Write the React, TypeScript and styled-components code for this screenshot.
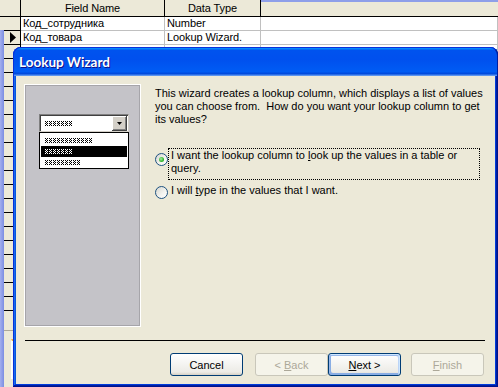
import React, { useId } from 'react';
import styled, { createGlobalStyle, css } from 'styled-components';

const GlobalStyle = createGlobalStyle`
  html, body { margin: 0; padding: 0; }
  body {
    width: 498px;
    height: 387px;
    overflow: hidden;
    background: #ece9d8;
    font-family: "Liberation Sans", Arial, sans-serif;
    font-size: 11px;
    color: #000;
  }
  * { box-sizing: border-box; }
`;

/* ---------- background: table design grid ---------- */

const Screen = styled.div`
  position: relative;
  width: 498px;
  height: 387px;
  overflow: hidden;
  display: flex;
  flex-direction: column;
  background: #ece9d8;
`;

const HeaderRow = styled.div`
  display: flex;
  flex: none;
  height: 17px;
  border-bottom: 1px solid #000;
`;

const HeadCell = styled.div<{ $w?: number }>`
  display: flex;
  align-items: center;
  justify-content: center;
  line-height: 16px;
  letter-spacing: -0.1px;
  ${(p) =>
    p.$w
      ? css`
          width: ${p.$w}px;
          flex: none;
          border-right: 1px solid #000;
        `
      : css`
          flex: 1;
          box-shadow: inset 0 2px #8e9fe9;
        `}
`;

const Main = styled.div`
  flex: 1;
  display: flex;
  min-height: 0;
`;

const Strip = styled.div`
  flex: none;
  width: 4px;
  margin-top: 13px;
  background: linear-gradient(90deg, #a3afee, #7c8ee2);
`;

const Sheet = styled.div`
  flex: 1;
  display: flex;
  flex-direction: column;
`;

const Row = styled.div`
  display: flex;
  flex: none;
  height: 14px;
`;

const SelCell = styled.div`
  flex: none;
  width: 17px;
  display: flex;
  align-items: center;
  justify-content: center;
  padding-left: 3px;
  background: #ece9d8;
  border-right: 1px solid #000;
  border-bottom: 1px solid #000;
`;

const DataCell = styled.div<{ $w?: number }>`
  ${(p) => (p.$w ? css`width: ${p.$w}px; flex: none;` : css`flex: 1;`)}
  background: #fff;
  border-right: 1px solid #c0c0c0;
  border-bottom: 1px solid #c0c0c0;
  padding-left: 2px;
  line-height: 13px;
  letter-spacing: -0.1px;
  white-space: nowrap;
  overflow: hidden;
`;

const Gap = styled.div`
  height: 19px;
  flex: none;
`;

const LowerPane = styled.div`
  flex: 1;
  border-top: 1px solid #aca899;
  padding: 8px 0 0 7px;
`;

const Tab = styled.div`
  width: 60px;
  height: 40px;
  border-top: 2px solid #f7b03a;
  border-left: 1px solid #fff;
  background: #fbfbf8;
`;

const Pointer = () => (
  <svg width="7" height="11" viewBox="0 0 7 11">
    <polygon points="0,0 6,5.5 0,11" fill="#000" />
  </svg>
);

/* ---------- wizard window ---------- */

const Win = styled.div`
  position: absolute;
  left: 13px;
  top: 47px;
  width: 485px;
  height: 340px;
  display: flex;
  flex-direction: column;
  background: #ece9d8;
  border-radius: 8px 8px 0 0;
  padding: 0 0 3px 0;
  box-shadow: inset -1px -1px #00138c, inset 1px 1px #0831d9,
    inset -2px -2px #001ea0, inset 2px 2px #166aee, inset -3px -3px #003bda,
    inset 3px 3px #0855dd;
`;

const TitleBar = styled.div`
  flex: none;
  height: 29px;
  display: flex;
  align-items: center;
  padding-left: 5px;
  border-radius: 8px 8px 0 0;
  border-top: 1px solid #0831d9;
  border-left: 1px solid #0831d9;
  border-right: 1px solid #001ea0;
  background: linear-gradient(
    180deg,
    #0997ff,
    #0053ee 8%,
    #0050ee 40%,
    #005cf4 84%,
    #0046d8 93%,
    #4a8af0 96%,
    #6a9ff0 100%
  );
  color: #fff;
  font-family: Lato, "Liberation Sans", sans-serif;
  font-weight: 700;
  font-size: 13.5px;
  line-height: 27px;
  text-shadow: 1px 1px #0f1089;
`;

const Body = styled.div`
  flex: 1;
  margin: 0 3px;
  display: flex;
  flex-direction: column;
  padding: 9px 10px 8px 9px;
`;

const Top = styled.div`
  display: flex;
  gap: 15px;
`;

const Picture = styled.div`
  flex: none;
  width: 115px;
  height: 241px;
  border: 1px solid #a6a5aa;
  box-shadow: 0 0 0 1px #fff;
  background: #c4c3c8;
  padding: 28px 0 0 13px;
`;

const Combo = styled.div`
  width: 90px;
  height: 18px;
  display: flex;
  align-items: center;
  padding-left: 5px;
  background: #fff;
  border: 1px solid;
  border-color: #808080 #d4d0c8 #d4d0c8 #808080;
  box-shadow: inset 1px 1px #404040;
`;

const DropButton = styled.div`
  margin-left: auto;
  margin-right: 1px;
  width: 15px;
  height: 15px;
  display: flex;
  align-items: center;
  justify-content: center;
  background: #d4d0c8;
  box-shadow: inset -1px -1px #404040, inset 1px 1px #ffffff,
    inset -2px -2px #808080;
`;

const List = styled.div`
  width: 90px;
  height: 37px;
  border: 1px solid #000;
  background: #fff;
  padding: 2px 1px 0 1px;
`;

const ListItem = styled.div<{ $selected?: boolean }>`
  height: 11px;
  display: flex;
  align-items: center;
  padding-left: 4px;
  background: ${(p) => (p.$selected ? '#000' : 'transparent')};
`;

const HatchSvg = styled.svg`
  display: block;
`;

const Hatch = ({ w, color = '#000' }: { w: number; color?: string }) => {
  const raw = useId();
  const id = 'h' + raw.replace(/[^a-zA-Z0-9]/g, '');
  return (
    <HatchSvg width={w} height={5} viewBox={`0 0 ${w} 5`}>
      <defs>
        <pattern id={id} width="4" height="5" patternUnits="userSpaceOnUse">
          <rect x="0" y="0" width="1" height="1" fill={color} />
          <rect x="2" y="0" width="1" height="1" fill={color} />
          <rect x="1" y="1" width="1" height="1" fill={color} />
          <rect x="0" y="2" width="1" height="1" fill={color} />
          <rect x="2" y="2" width="1" height="1" fill={color} />
          <rect x="1" y="3" width="1" height="1" fill={color} />
          <rect x="0" y="4" width="1" height="1" fill={color} />
          <rect x="2" y="4" width="1" height="1" fill={color} />
        </pattern>
      </defs>
      <rect width={w} height={5} fill={`url(#${id})`} />
    </HatchSvg>
  );
};

const Content = styled.div`
  flex: 1;
  display: flex;
  flex-direction: column;
  letter-spacing: 0;
`;

const Para = styled.p`
  margin: 2px 0 0 0;
  line-height: 13px;
  white-space: nowrap;
`;

const RadioRow = styled.div<{ $mt: number }>`
  display: flex;
  align-items: flex-start;
  margin-top: ${(p) => p.$mt}px;
`;

const RadioCircle = styled.div<{ $top: number }>`
  flex: none;
  width: 13px;
  height: 13px;
  margin-top: ${(p) => p.$top}px;
  border-radius: 50%;
  border: 1px solid #1c5180;
  background: linear-gradient(135deg, #d6d6d0 0%, #f4f4f0 60%, #ffffff 100%);
  display: flex;
  align-items: center;
  justify-content: center;
`;

const RadioDot = styled.div`
  width: 5px;
  height: 5px;
  border-radius: 50%;
  background: radial-gradient(circle at 40% 40%, #a8eca4, #2fb52c 60%, #1d9a1b);
`;

const RadioLabel = styled.div<{ $focus?: boolean }>`
  line-height: 13px;
  white-space: nowrap;
  border: 1px dotted ${(p) => (p.$focus ? '#000' : 'transparent')};
  padding: ${(p) => (p.$focus ? '0 2px 4px 2px' : '0 2px')};
  ${(p) => p.$focus && css`width: 312px;`}
`;

const Separator = styled.div`
  height: 1px;
  margin-top: 14px;
  background: #000;
`;

const Buttons = styled.div`
  display: flex;
  justify-content: flex-end;
  margin-top: 12px;
`;

const Button = styled.button<{ $mr?: number; $default?: boolean }>`
  width: 73px;
  height: 23px;
  margin: 0 ${(p) => p.$mr ?? 0}px 0 0;
  padding: 0;
  border: 1px solid #003c74;
  border-radius: 3px;
  background: linear-gradient(180deg, #ffffff, #ecebe6 86%, #d6d0c5);
  font-family: "Liberation Sans", Arial, sans-serif;
  font-size: 11px;
  color: #000;
  ${(p) =>
    p.$default &&
    css`
      box-shadow: inset -1px 1px #cee7ff, inset 1px 2px #98b8ea,
        inset -2px 2px #bcd4f6, inset 1px -1px #89ade4, inset 2px -2px #89ade4;
    `}
  &:disabled {
    border-color: #c9c7ba;
    background: #f5f4ea;
    color: #aca899;
    box-shadow: none;
  }
  u { text-decoration: underline; }
`;

const ROW_COUNT = 21;

export default function App() {
  const rows = Array.from({ length: ROW_COUNT }, (_, i) => i);
  const data: Record<number, [string, string]> = {
    0: ['Код_сотрудника', 'Number'],
    1: ['Код_товара', 'Lookup Wizard.'],
  };
  return (
    <Screen>
      <GlobalStyle />
      <HeaderRow>
        <HeadCell $w={21} />
        <HeadCell $w={144}>Field Name</HeadCell>
        <HeadCell $w={96}>Data Type</HeadCell>
        <HeadCell />
      </HeaderRow>
      <Main>
        <Strip />
        <Sheet>
          {rows.map((i) => (
            <Row key={i}>
              <SelCell>{i === 1 && <Pointer />}</SelCell>
              <DataCell $w={144}>{data[i]?.[0]}</DataCell>
              <DataCell $w={96}>{data[i]?.[1]}</DataCell>
              <DataCell />
            </Row>
          ))}
          <Gap />
          <LowerPane>
            <Tab />
          </LowerPane>
        </Sheet>
      </Main>

      <Win>
        <TitleBar>Lookup Wizard</TitleBar>
        <Body>
          <Top>
            <Picture>
              <Combo>
                <Hatch w={27} />
                <DropButton>
                  <svg width="5" height="3" viewBox="0 0 5 3">
                    <polygon points="0,0 5,0 2.5,3" fill="#000" />
                  </svg>
                </DropButton>
              </Combo>
              <List>
                <ListItem>
                  <Hatch w={47} />
                </ListItem>
                <ListItem $selected>
                  <Hatch w={27} color="#fff" />
                </ListItem>
                <ListItem>
                  <Hatch w={35} />
                </ListItem>
              </List>
            </Picture>
            <Content>
              <Para>
                This wizard creates a lookup column, which displays a list of values
                <br />
                you can choose from.&nbsp; How do you want your lookup column to get
                <br />
                its values?
              </Para>
              <RadioRow $mt={22}>
                <RadioCircle $top={5}>
                  <RadioDot />
                </RadioCircle>
                <RadioLabel $focus>
                  I want the lookup column to <u>l</u>ook up the values in a table or
                  <br />
                  query.
                </RadioLabel>
              </RadioRow>
              <RadioRow $mt={3}>
                <RadioCircle $top={3} />
                <RadioLabel>
                  I will <u>t</u>ype in the values that I want.
                </RadioLabel>
              </RadioRow>
            </Content>
          </Top>
          <Separator />
          <Buttons>
            <Button $mr={12}>Cancel</Button>
            <Button disabled>
              &lt; <u>B</u>ack
            </Button>
            <Button $default $mr={10}>
              <u>N</u>ext &gt;
            </Button>
            <Button disabled $mr={1}>
              <u>F</u>inish
            </Button>
          </Buttons>
        </Body>
      </Win>
    </Screen>
  );
}
